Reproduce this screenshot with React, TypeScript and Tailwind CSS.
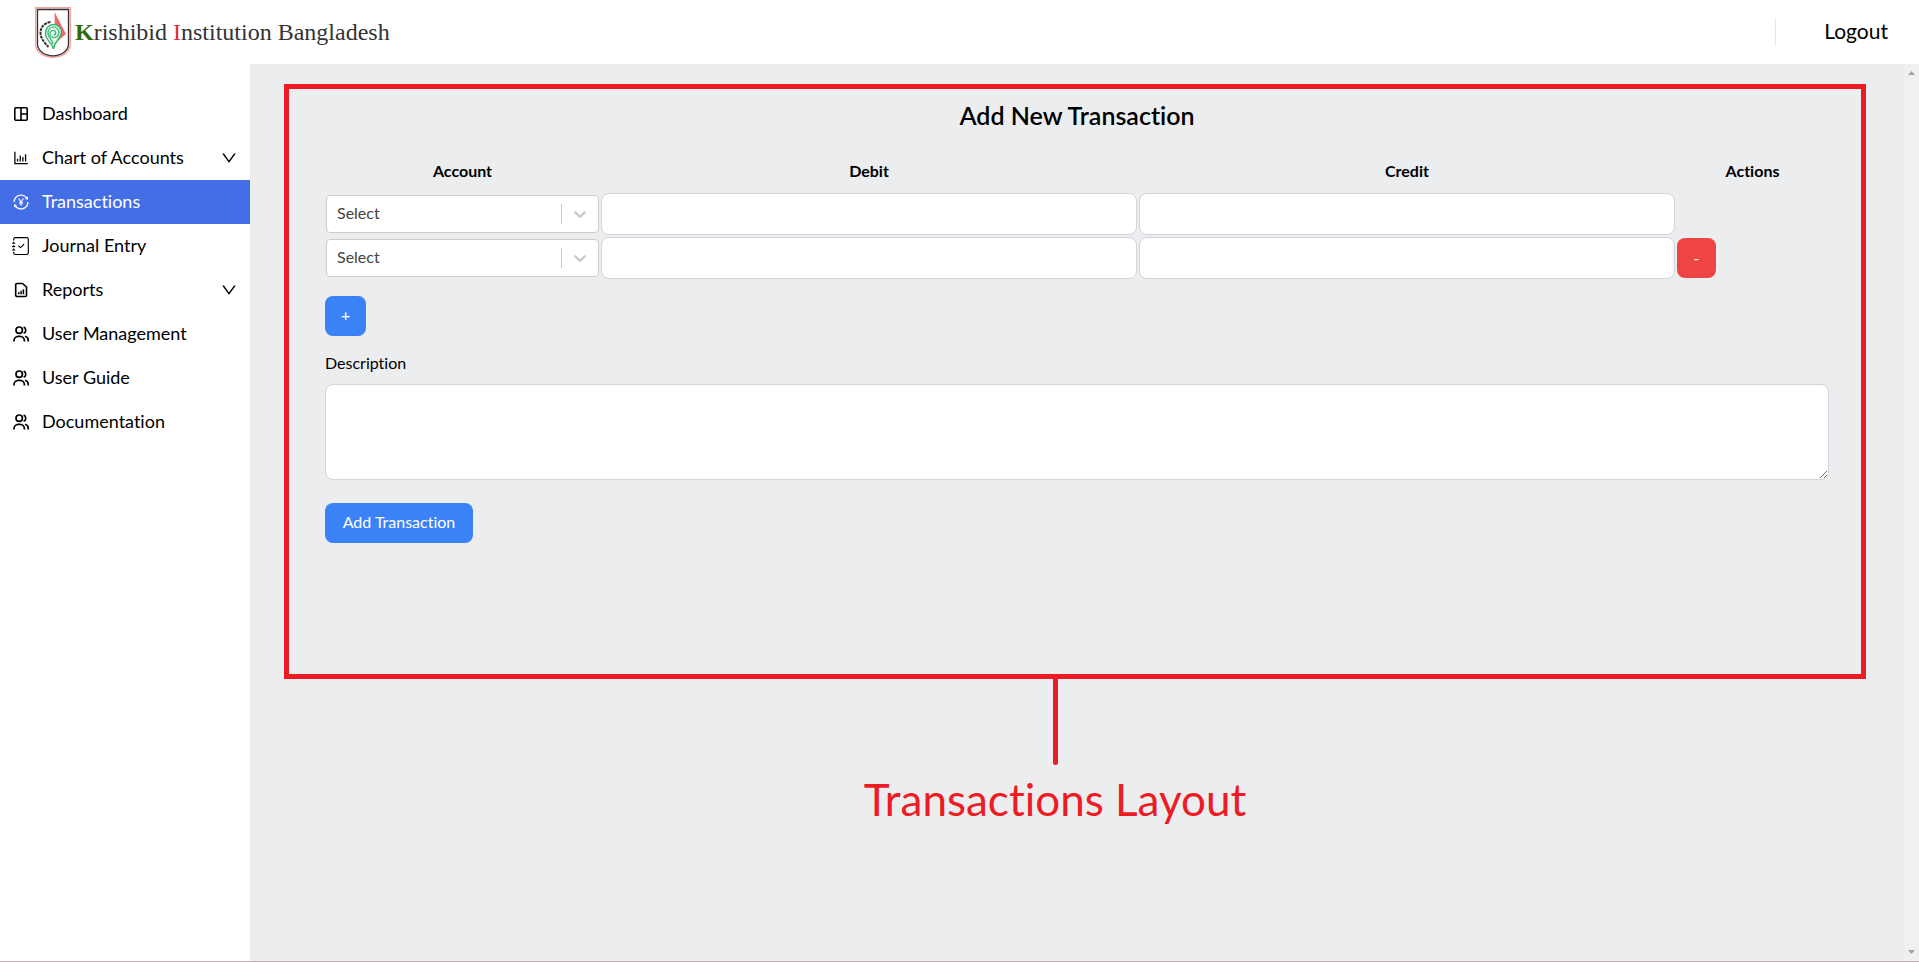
import { useState } from "react";
import type { ReactNode } from "react";
import { AiOutlineBarChart, AiOutlineDown, AiOutlineTransaction } from "react-icons/ai";
import { BsJournalCheck } from "react-icons/bs";

function DashboardIcon() {
  return (
    <svg viewBox="0 0 16 16" className="size-4" fill="none" stroke="currentColor" strokeWidth="1.6" aria-hidden="true">
      <rect x="1.8" y="1.8" width="12.4" height="12.4" rx="1" />
      <path d="M8 2v12M8 8h6" />
    </svg>
  );
}

function ReportIcon() {
  return (
    <svg viewBox="0 0 16 16" className="size-4" fill="none" stroke="currentColor" strokeWidth="1.6" aria-hidden="true">
      <path d="M4 1.500h5.500L13.500 5v8.200a1.300 1.300 0 0 1-1.300 1.300H4a1.300 1.300 0 0 1-1.300-1.300V2.800A1.300 1.300 0 0 1 4 1.500Z" strokeLinejoin="round" />
      <path d="M5.800 12.200v-2M8.100 12.200V8.800M10.400 12.200V7.200" strokeWidth="1.500" />
    </svg>
  );
}

function UsersIcon() {
  return (
    <svg viewBox="0 0 18 18" className="size-[18px]" fill="none" stroke="currentColor" strokeWidth="1.7" aria-hidden="true">
      <circle cx="7.200" cy="5.200" r="3.200" />
      <path d="M11.600 2.100a3.300 3.300 0 0 1 0 6.200" />
      <path d="M2 16.500v-.9a4.300 4.300 0 0 1 4.300-4.300h1.800a4.300 4.300 0 0 1 4.300 4.300v.9" />
      <path d="M13 11.300c2 .5 3.200 2 3.200 4v1.200" />
    </svg>
  );
}

function Crest() {
  return (
    <svg viewBox="0 0 36 51" className="h-[51px] w-9" fill="none" aria-hidden="true">
      <path d="M.7.7h34.600v36.500C35.300 45 27 50.300 18 50.300S.7 45 .7 37.200Z" stroke="#f9a0a0" strokeWidth="1.400" />
      <path d="M2.500 2.500h31v34.500c0 7-7.500 11.800-15.500 11.800S2.500 44 2.500 37Z" stroke="#333" strokeWidth="1.300" fill="#fff" />
      <path d="M19.500 5 31 27 20 36.500Z" fill="#ee6a6a" />
      <path d="M15.500 15C9.500 16 5.500 20 5.500 25.500c0 6 4 10 8 14.500" stroke="#333" strokeWidth="2" strokeDasharray="3 .8" />
      <path d="M18.500 42c-.5-6-8-8-8-15.500 0-5.500 3.500-9 8-9s8 3.500 8 8c0 6-6.500 7-8 16.500Z" fill="#dff5e8" stroke="#2fb36c" strokeWidth="1.300" />
      <path d="M18 37c0-4-5-6-5-10.500 0-4 2.500-6.500 5.500-6.500s5.500 2.500 5.500 5.500-2.500 5-5 5-4-1.700-4-3.800 1.500-3.200 3.200-3.200 2.500 1.200 2.500 2.500-1 2-2 2" stroke="#2fb36c" strokeWidth="1.200" />
    </svg>
  );
}

type Item = { label: string; icon: ReactNode; active?: boolean; expandable?: boolean };

const items: Item[] = [
  { label: "Dashboard", icon: <DashboardIcon /> },
  { label: "Chart of Accounts", icon: <AiOutlineBarChart className="size-[18px]" />, expandable: true },
  { label: "Transactions", icon: <AiOutlineTransaction className="size-[18px]" />, active: true },
  { label: "Journal Entry", icon: <BsJournalCheck className="size-[18px]" /> },
  { label: "Reports", icon: <ReportIcon />, expandable: true },
  { label: "User Management", icon: <UsersIcon /> },
  { label: "User Guide", icon: <UsersIcon /> },
  { label: "Documentation", icon: <UsersIcon /> },
];

function Sidebar() {
  return (
    <nav className="w-[250px] shrink-0 bg-white pt-7" aria-label="Main">
      <ul>
        {items.map((item) => (
          <li key={item.label}>
            <a
              href="#"
              aria-current={item.active ? "page" : undefined}
              className={
                item.active
                  ? "flex h-11 items-center gap-3 bg-[#436ee6] pr-3 pl-3 text-lg leading-6 text-white"
                  : "flex h-11 items-center gap-3 pr-3 pl-3 text-lg leading-6 text-black"
              }
            >
              <span className="flex w-[18px] shrink-0 justify-center">{item.icon}</span>
              <span className="grow pb-0.5">{item.label}</span>
              {item.expandable && <AiOutlineDown className="size-[18px]" />}
            </a>
          </li>
        ))}
      </ul>
    </nav>
  );
}

function AccountSelect({ row }: { row: number }) {
  return (
    <div className="relative">
      <select
        aria-label={`Account ${row}`}
        className="block h-[38px] w-full appearance-none rounded border border-[#cccccc] bg-white pr-12 pb-0.5 pl-2.5 text-[#444]"
      >
        <option>Select</option>
      </select>
      <div className="pointer-events-none absolute inset-y-0 right-px flex items-center text-[#cccccc]">
        <span className="h-5 w-px bg-[#cccccc]" />
        <svg viewBox="0 0 20 20" className="mx-2 size-5" fill="currentColor" aria-hidden="true">
          <path d="M4.516 7.548c0.436-0.446 1.043-0.481 1.576 0l3.908 3.747 3.908-3.747c0.533-0.481 1.141-0.446 1.574 0 0.436 0.445 0.408 1.197 0 1.615-0.406 0.418-4.695 4.502-4.695 4.502-0.217 0.223-0.502 0.335-0.787 0.335s-0.570-0.112-0.789-0.335c0 0-4.287-4.084-4.695-4.502s-0.436-1.170 0-1.615z" />
        </svg>
      </div>
    </div>
  );
}

const fieldClass = "block w-full rounded-lg border border-gray-300 bg-white px-3";
const blueButton = "h-10 rounded-lg bg-[#3b82f6] px-4 pb-0.5 text-white";

export default function App() {
  const [rows, setRows] = useState([1, 2]);
  return (
    <div className="flex min-h-screen flex-col border-b border-[#bbb3b5] bg-white font-['Lato',sans-serif] text-base text-black [font-variant-ligatures:none]">
      <header className="flex h-16 items-center justify-between pr-[31px] pl-[35px]">
        <a href="#" className="flex items-center gap-1">
          <Crest />
          <span className="font-['Liberation_Serif',serif] text-2xl whitespace-nowrap text-[#333]">
            <span className="font-bold text-[#2f6b0a]">K</span>rishibid <span className="text-[#dc2f36]">I</span>nstitution
            Bangladesh
          </span>
        </a>
        <div className="flex h-7 items-center border-l border-gray-200 pl-12">
          <button type="button" className="pb-0.5 text-[21px] leading-7">
            Logout
          </button>
        </div>
      </header>

      <div className="flex grow">
        <Sidebar />
        <main className="flex grow flex-col bg-[#ebedef] pt-5 pr-[37px] pl-[34px]">
          <section className="border-5 border-[#ed1c24] pt-2.5 pr-8 pb-[131px] pl-9">
            <h1 className="text-center text-[25px] leading-8 font-semibold">Add New Transaction</h1>
            <form onSubmit={(e) => e.preventDefault()}>
              <table className="mt-[19px] w-full table-fixed">
                <thead>
                  <tr className="h-[42px]">
                    <th className="w-[275px] font-bold">Account</th>
                    <th className="font-bold">Debit</th>
                    <th className="font-bold">Credit</th>
                    <th className="w-[153px] font-bold">Actions</th>
                  </tr>
                </thead>
                <tbody>
                  {rows.map((row, i) => (
                    <tr key={row}>
                      <td className="p-px">
                        <AccountSelect row={i + 1} />
                      </td>
                      <td className="p-px">
                        <input type="text" aria-label={`Debit ${i + 1}`} className={`${fieldClass} h-[42px]`} />
                      </td>
                      <td className="p-px">
                        <input type="text" aria-label={`Credit ${i + 1}`} className={`${fieldClass} h-[42px]`} />
                      </td>
                      <td className="p-px">
                        {i > 0 && (
                          <button
                            type="button"
                            aria-label="Remove row"
                            onClick={() => setRows(rows.filter((r) => r !== row))}
                            className="block h-10 w-[39px] rounded-lg bg-[#ef4444] text-white"
                          >
                            -
                          </button>
                        )}
                      </td>
                    </tr>
                  ))}
                </tbody>
              </table>
              <button
                type="button"
                aria-label="Add row"
                onClick={() => setRows([...rows, Math.max(...rows) + 1])}
                className={`${blueButton} mt-4 block`}
              >
                +
              </button>
              <label htmlFor="description" className="mt-[15px] mb-[9px] block">
                Description
              </label>
              <textarea id="description" className={`${fieldClass} h-24`} />
              <button type="submit" className={`${blueButton} mt-[23px] block min-w-[148px]`}>
                Add Transaction
              </button>
            </form>
          </section>
          <div className="flex flex-col items-center pr-10">
            <div className="h-[86px] w-[5px] rounded-b-sm bg-[#ed1c24]" />
            <p className="mt-2 text-[44px] leading-[52px] text-[#ed1c24]">Transactions Layout</p>
          </div>
        </main>
        <div className="flex w-4 shrink-0 flex-col items-center justify-between bg-[#f0f0f0] py-[7px]" aria-hidden="true">
          <svg viewBox="0 0 7 4" className="h-1 w-[7px]" fill="#a3a3a3">
            <path d="M0 4h7L3.500 0Z" />
          </svg>
          <svg viewBox="0 0 7 4" className="h-1 w-[7px]" fill="#a3a3a3">
            <path d="M0 0h7L3.500 4Z" />
          </svg>
        </div>
      </div>
    </div>
  );
}
